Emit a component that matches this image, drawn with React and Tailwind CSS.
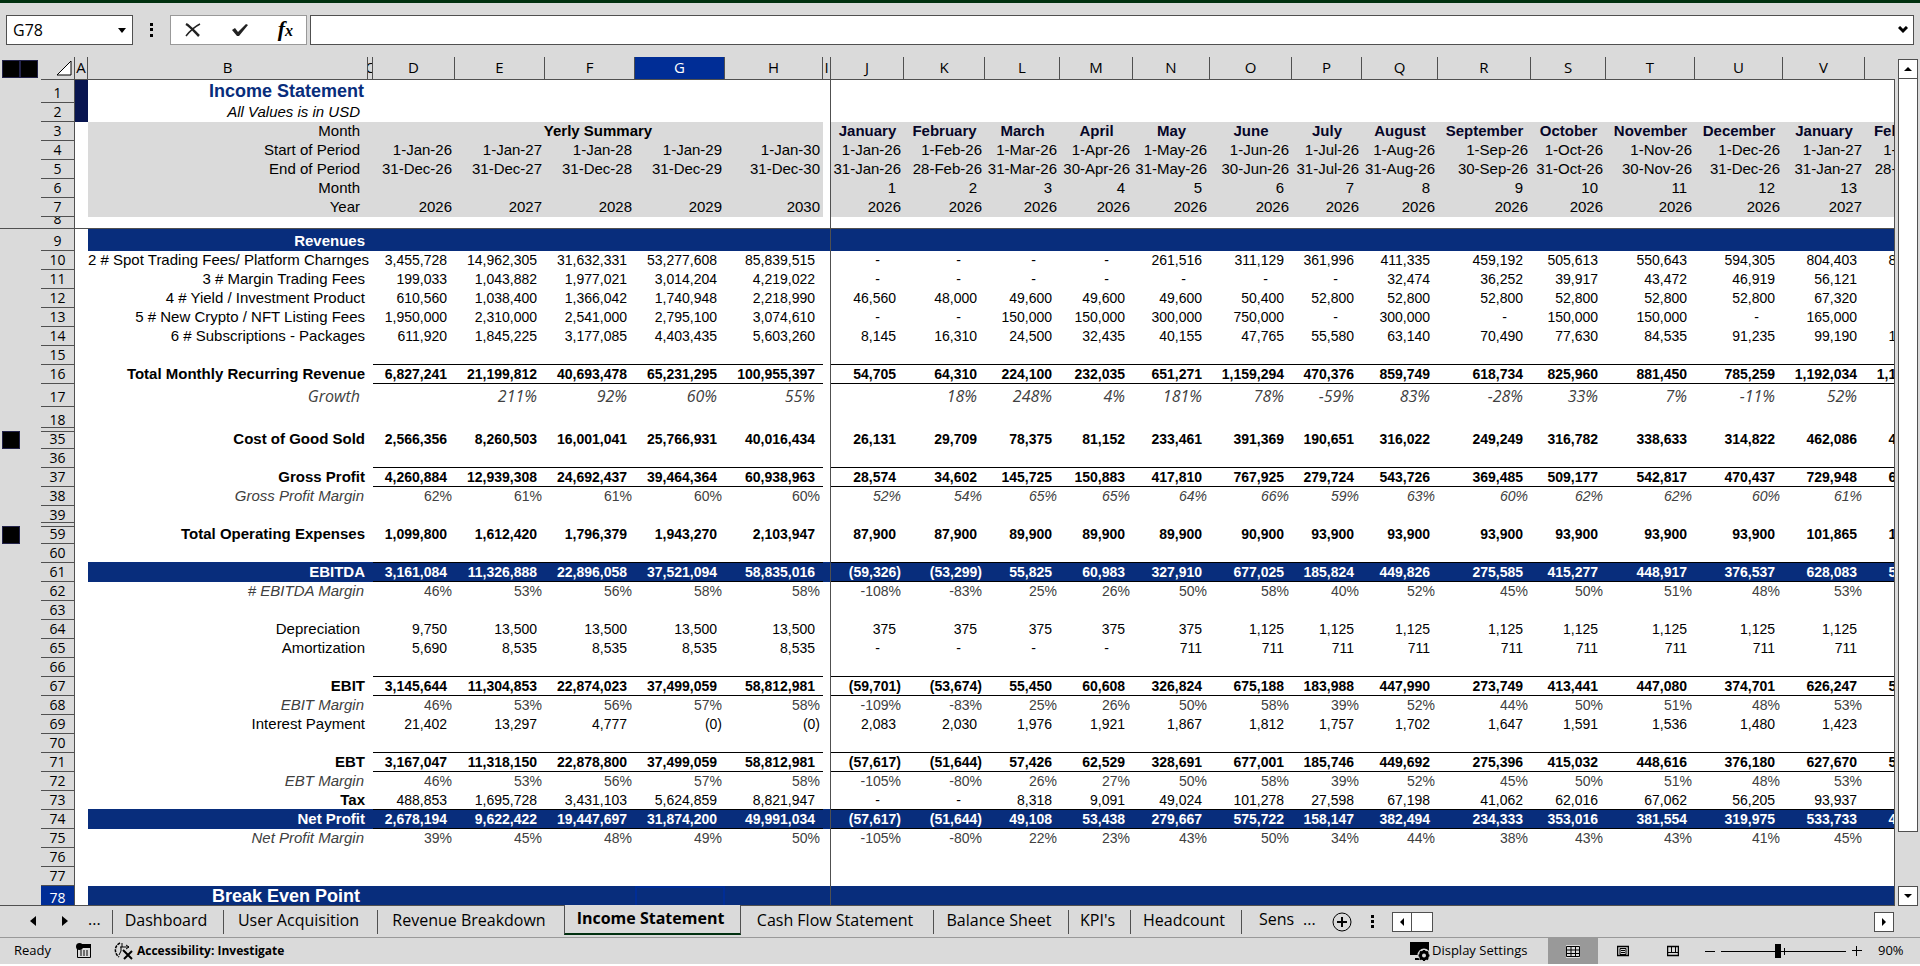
import clsx from "clsx";

const COLUMNS = [
  { id: "A", width: 13 },
  { id: "B", width: 280 },
  { id: "C", width: 5 },
  { id: "D", width: 82 },
  { id: "E", width: 90 },
  { id: "F", width: 90 },
  { id: "G", width: 90 },
  { id: "H", width: 98 },
  { id: "I", width: 8 },
  { id: "J", width: 73 },
  { id: "K", width: 81 },
  { id: "L", width: 75 },
  { id: "M", width: 73 },
  { id: "N", width: 77 },
  { id: "O", width: 82 },
  { id: "P", width: 70 },
  { id: "Q", width: 76 },
  { id: "R", width: 93 },
  { id: "S", width: 75 },
  { id: "T", width: 89 },
  { id: "U", width: 88 },
  { id: "V", width: 82 },
  { id: "W", width: 82 },
];

const MONTH_COLUMNS = COLUMNS.slice(9);
const YEAR_COLUMNS = COLUMNS.slice(3, 8);

const split = (text) => (text ? text.split(" ").map((v) => (v === "_" ? "" : v)) : []);

// years fill D:H, months fill J:W, "_" is an empty cell
const ROWS = [
  { n: 1, label: "Income Statement", kind: "title", height: "h-[23px]" },
  { n: 2, label: "All Values is in USD", kind: "subtitle" },
  {
    n: 3,
    label: "Month",
    kind: "head",
    summary: "Yerly Summary",
    months: "January February March April May June July August September October November December January February",
    monthNames: true,
  },
  {
    n: 4,
    label: "Start of Period",
    kind: "head",
    years: "1-Jan-26 1-Jan-27 1-Jan-28 1-Jan-29 1-Jan-30",
    months: "1-Jan-26 1-Feb-26 1-Mar-26 1-Apr-26 1-May-26 1-Jun-26 1-Jul-26 1-Aug-26 1-Sep-26 1-Oct-26 1-Nov-26 1-Dec-26 1-Jan-27 1-Feb-27",
  },
  {
    n: 5,
    label: "End of Period",
    kind: "head",
    years: "31-Dec-26 31-Dec-27 31-Dec-28 31-Dec-29 31-Dec-30",
    months: "31-Jan-26 28-Feb-26 31-Mar-26 30-Apr-26 31-May-26 30-Jun-26 31-Jul-26 31-Aug-26 30-Sep-26 31-Oct-26 30-Nov-26 31-Dec-26 31-Jan-27 28-Feb-27",
  },
  { n: 6, label: "Month", kind: "head", months: "1 2 3 4 5 6 7 8 9 10 11 12 13 14", wide: true },
  {
    n: 7,
    label: "Year",
    kind: "head",
    years: "2026 2027 2028 2029 2030",
    months: "2026 2026 2026 2026 2026 2026 2026 2026 2026 2026 2026 2026 2027 2027",
  },
  { n: 8, height: "h-[12px]", frozen: true },
  { n: 9, label: "Revenues", kind: "band", height: "h-[22px]" },
  {
    n: 10,
    label: "2 # Spot Trading Fees/ Platform Charnges",
    years: "3,455,728 14,962,305 31,632,331 53,277,608 85,839,515",
    months: "- - - - 261,516 311,129 361,996 411,335 459,192 505,613 550,643 594,305 804,403 862,140",
  },
  {
    n: 11,
    label: "3 # Margin Trading Fees",
    years: "199,033 1,043,882 1,977,021 3,014,204 4,219,022",
    months: "- - - - - - - 32,474 36,252 39,917 43,472 46,919 56,121 60,150",
  },
  {
    n: 12,
    label: "4 # Yield / Investment Product",
    years: "610,560 1,038,400 1,366,042 1,740,948 2,218,990",
    months: "46,560 48,000 49,600 49,600 49,600 50,400 52,800 52,800 52,800 52,800 52,800 52,800 67,320 69,400",
  },
  {
    n: 13,
    label: "5 # New Crypto / NFT Listing Fees",
    years: "1,950,000 2,310,000 2,541,000 2,795,100 3,074,610",
    months: "- - 150,000 150,000 300,000 750,000 - 300,000 - 150,000 150,000 - 165,000 -",
  },
  {
    n: 14,
    label: "6 # Subscriptions - Packages",
    years: "611,920 1,845,225 3,177,085 4,403,435 5,603,260",
    months: "8,145 16,310 24,500 32,435 40,155 47,765 55,580 63,140 70,490 77,630 84,535 91,235 99,190 108,310",
  },
  { n: 15, rule: "black" },
  {
    n: 16,
    label: "Total Monthly Recurring Revenue",
    kind: "total",
    rule: "black",
    years: "6,827,241 21,199,812 40,693,478 65,231,295 100,955,397",
    months: "54,705 64,310 224,100 232,035 651,271 1,159,294 470,376 859,749 618,734 825,960 881,450 785,259 1,192,034 1,100,000",
  },
  {
    n: 17,
    label: "Growth",
    kind: "growth",
    height: "h-[23px]",
    years: "_ 211% 92% 60% 55%",
    months: "_ 18% 248% 4% 181% 78% -59% 83% -28% 33% 7% -11% 52% -8%",
  },
  { n: 18, height: "h-[23px]", hiddenBelow: true },
  {
    n: 35,
    label: "Cost of Good Sold",
    kind: "total",
    hiddenAbove: true,
    years: "2,566,356 8,260,503 16,001,041 25,766,931 40,016,434",
    months: "26,131 29,709 78,375 81,152 233,461 391,369 190,651 316,022 249,249 316,782 338,633 314,822 462,086 436,000",
  },
  { n: 36, rule: "black" },
  {
    n: 37,
    label: "Gross Profit",
    kind: "total",
    rule: "black",
    years: "4,260,884 12,939,308 24,692,437 39,464,364 60,938,963",
    months: "28,574 34,602 145,725 150,883 417,810 767,925 279,724 543,726 369,485 509,177 542,817 470,437 729,948 664,000",
  },
  {
    n: 38,
    label: "Gross Profit Margin",
    kind: "margin",
    italicMonths: true,
    years: "62% 61% 61% 60% 60%",
    months: "52% 54% 65% 65% 64% 66% 59% 63% 60% 62% 62% 60% 61% 60%",
  },
  { n: 39, hiddenBelow: true },
  {
    n: 59,
    label: "Total Operating Expenses",
    kind: "total",
    hiddenAbove: true,
    years: "1,099,800 1,612,420 1,796,379 1,943,270 2,103,947",
    months: "87,900 87,900 89,900 89,900 89,900 90,900 93,900 93,900 93,900 93,900 93,900 93,900 101,865 101,865",
  },
  { n: 60, rule: "band" },
  {
    n: 61,
    label: "EBITDA",
    kind: "band",
    rule: "black",
    years: "3,161,084 11,326,888 22,896,058 37,521,094 58,835,016",
    months: "(59,326) (53,299) 55,825 60,983 327,910 677,025 185,824 449,826 275,585 415,277 448,917 376,537 628,083 562,135",
  },
  {
    n: 62,
    label: "# EBITDA Margin",
    kind: "margin",
    years: "46% 53% 56% 58% 58%",
    months: "-108% -83% 25% 26% 50% 58% 40% 52% 45% 50% 51% 48% 53% 51%",
  },
  { n: 63 },
  {
    n: 64,
    label: "Depreciation",
    kind: "inset",
    years: "9,750 13,500 13,500 13,500 13,500",
    months: "375 375 375 375 375 1,125 1,125 1,125 1,125 1,125 1,125 1,125 1,125 1,125",
  },
  {
    n: 65,
    label: "Amortization",
    years: "5,690 8,535 8,535 8,535 8,535",
    months: "- - - - 711 711 711 711 711 711 711 711 711 711",
  },
  { n: 66, rule: "black" },
  {
    n: 67,
    label: "EBIT",
    kind: "total",
    rule: "black",
    years: "3,145,644 11,304,853 22,874,023 37,499,059 58,812,981",
    months: "(59,701) (53,674) 55,450 60,608 326,824 675,188 183,988 447,990 273,749 413,441 447,080 374,701 626,247 560,299",
  },
  {
    n: 68,
    label: "EBIT Margin",
    kind: "margin",
    years: "46% 53% 56% 57% 58%",
    months: "-109% -83% 25% 26% 50% 58% 39% 52% 44% 50% 51% 48% 53% 51%",
  },
  {
    n: 69,
    label: "Interest Payment",
    years: "21,402 13,297 4,777 (0) (0)",
    months: "2,083 2,030 1,976 1,921 1,867 1,812 1,757 1,702 1,647 1,591 1,536 1,480 1,423 1,366",
  },
  { n: 70, rule: "black" },
  {
    n: 71,
    label: "EBT",
    kind: "total",
    rule: "black",
    years: "3,167,047 11,318,150 22,878,800 37,499,059 58,812,981",
    months: "(57,617) (51,644) 57,426 62,529 328,691 677,001 185,746 449,692 275,396 415,032 448,616 376,180 627,670 561,665",
  },
  {
    n: 72,
    label: "EBT Margin",
    kind: "margin",
    years: "46% 53% 56% 57% 58%",
    months: "-105% -80% 26% 27% 50% 58% 39% 52% 45% 50% 51% 48% 53% 51%",
  },
  {
    n: 73,
    label: "Tax",
    kind: "boldLabel",
    rule: "band",
    years: "488,853 1,695,728 3,431,103 5,624,859 8,821,947",
    months: "- - 8,318 9,091 49,024 101,278 27,598 67,198 41,062 62,016 67,062 56,205 93,937 84,040",
  },
  {
    n: 74,
    label: "Net Profit",
    kind: "band",
    rule: "black",
    years: "2,678,194 9,622,422 19,447,697 31,874,200 49,991,034",
    months: "(57,617) (51,644) 49,108 53,438 279,667 575,722 158,147 382,494 234,333 353,016 381,554 319,975 533,733 477,625",
  },
  {
    n: 75,
    label: "Net Profit Margin",
    kind: "margin",
    years: "39% 45% 48% 49% 50%",
    months: "-105% -80% 22% 23% 43% 50% 34% 44% 38% 43% 43% 41% 45% 43%",
  },
  { n: 76 },
  { n: 77 },
  { n: 78, label: "Break Even Point", kind: "bandTitle", height: "h-[22px]", active: true },
];

const LABEL_STYLES = {
  title: "pr-1 text-[18px] leading-[22px] font-bold text-[#082d7c]",
  subtitle: "pr-2 text-[15px] leading-[18px] italic",
  head: "pr-2 text-[15px] leading-[18px]",
  band: "pr-[3px] text-[15px] leading-[18px] font-bold text-white",
  bandTitle: "pr-2 text-[18px] leading-[21px] font-bold text-white",
  total: "pr-[3px] text-[15px] leading-[18px] font-bold",
  boldLabel: "pr-[3px] text-[15px] leading-[18px] font-bold",
  growth: "pr-2 font-['Open_Sans',sans-serif] text-[16px] leading-5 italic text-[#404040]",
  margin: "pr-1 text-[15px] leading-[18px] italic text-[#404040]",
  inset: "pr-2 text-[15px] leading-[18px]",
  plain: "pr-[3px] text-[15px] leading-[18px]",
};

const VALUE_STYLES = {
  head: "text-[15px] leading-[18px]",
  total: "font-bold",
  band: "font-bold text-white",
  growth: "font-['Open_Sans',sans-serif] text-[16px] leading-5 italic text-[#404040]",
  margin: "text-[#404040]",
};

const valuePadding = (row, value) => {
  if (value === "-") return "pr-6";
  if (value.endsWith(")") || row.kind === "margin") return "pr-[3px]";
  if (row.kind === "head" && !row.wide) return "pr-[3px]";
  return "pr-2";
};

const OutlineMark = () => (
  <span className="block h-[18px] w-[18px] border border-[#23234a] bg-black" />
);

const SheetRow = ({ row }) => {
  const years = split(row.years);
  const months = split(row.months);
  const isBand = row.kind === "band" || row.kind === "bandTitle";
  const fill = isBand ? "bg-[#082d7c]" : row.kind === "head" ? "bg-[#dadada]" : "bg-white";
  const frozen = row.frozen && "border-b border-[#505050]";
  const rule = row.rule ? "border-b border-black" : !row.frozen && "pb-px";
  const sideRule = row.rule === "band" ? "border-b border-[#082d7c]" : !row.frozen && "pb-px";

  return (
    <tr className={row.height || "h-[19px]"}>
      <td className={clsx("bg-[#dadada] p-0 pl-[2px] align-bottom", frozen)}>
        {row.hiddenAbove && <OutlineMark />}
      </td>
      <th
        scope="row"
        className={clsx(
          "overflow-hidden border-r border-[#505050] p-0 font-['Open_Sans',sans-serif] font-normal",
          row.hiddenAbove ? "align-top" : "align-bottom",
          row.active ? "bg-[#002d96] text-white" : "bg-[#dadada]",
          !row.hiddenBelow && "border-b",
        )}
      >
        {row.hiddenAbove && <div className="h-[2px] border-b border-[#505050]" />}
        <div
          className={clsx(
            "leading-[18px]",
            row.hiddenAbove && "-mt-[2px]",
            row.hiddenBelow && "mb-[2px] h-[17px] border-b border-[#505050]",
            row.frozen && "flex h-[11px] items-end justify-center overflow-hidden",
          )}
        >
          {row.n}
        </div>
      </th>
      <td className={clsx("p-0", row.n < 3 ? "bg-[#081550]" : "bg-white", frozen)} />
      <td className={clsx("p-0 text-right align-bottom whitespace-nowrap", fill, frozen, sideRule, LABEL_STYLES[row.kind || "plain"])}>
        {row.label}
      </td>
      <td className={clsx("p-0", fill, frozen, sideRule)} />
      {row.summary ? (
        <td colSpan={5} className={clsx("p-0 pb-px text-center align-bottom text-[15px] leading-[18px] font-bold", fill)}>
          {row.summary}
        </td>
      ) : (
        YEAR_COLUMNS.map((col, i) => (
          <td
            key={col.id}
            className={clsx(
              "p-0 text-right align-bottom whitespace-nowrap",
              fill,
              frozen,
              rule,
              VALUE_STYLES[row.kind],
              valuePadding(row, years[i] || ""),
              row.active && col.id === "G" && "border-x-2 border-t-2 border-[#002d96]",
            )}
          >
            {years[i]}
          </td>
        ))
      )}
      <td
        className={clsx(
          "border-r border-r-[#505050] p-0",
          isBand ? "bg-[#082d7c]" : "bg-white",
          row.frozen && "border-b border-b-[#505050]",
          row.rule === "band" && "border-b border-b-[#082d7c]",
        )}
      />
      {MONTH_COLUMNS.map((col, i) => (
        <td
          key={col.id}
          className={clsx(
            "p-0 align-bottom whitespace-nowrap",
            fill,
            frozen,
            rule,
            VALUE_STYLES[row.kind],
            row.monthNames
              ? "text-center font-bold text-[#060628]"
              : ["text-right", valuePadding(row, months[i] || "")],
            row.italicMonths && "italic",
          )}
        >
          {months[i]}
        </td>
      ))}
    </tr>
  );
};

const FormulaBar = () => (
  <header className="flex items-center border-t-[3px] border-[#00300f] py-3 pr-[6px] pl-[6px] font-['Open_Sans',sans-serif]">
    <div className="flex h-[30px] w-[127px] items-center border border-[#505050] bg-white pr-[6px]">
      <input aria-label="Name box" defaultValue="G78" className="w-full min-w-0 bg-transparent pl-[6px] text-[16px] outline-none" />
      <button aria-label="Show names" className="shrink-0">
        <svg width="8" height="5" viewBox="0 0 8 5"><path d="M0 0h8L4 5z" /></svg>
      </button>
    </div>
    <svg className="mx-[16px]" width="5" height="14" viewBox="0 0 5 14">
      <path d="M1 0h3v3H1zM1 5h3v3H1zM1 11h3v3H1z" />
    </svg>
    <div className="flex h-[30px] w-[137px] items-center justify-between border border-[#999] bg-white px-[13px]">
      <button aria-label="Cancel">
        <svg width="18" height="16" viewBox="0 0 18 16" fill="none" stroke="#222">
          <path d="M2 2c4 2 8 7 13 12" strokeWidth="2.500" />
          <path d="M16 2C10 5 6 9 2 14" strokeWidth="1.500" />
        </svg>
      </button>
      <button aria-label="Enter">
        <svg width="18" height="14" viewBox="0 0 18 14" fill="#222">
          <path d="M1 7l3-2 3 4L15 1l2 1L8 13H6z" />
        </svg>
      </button>
      <button aria-label="Insert function" className="font-['Liberation_Serif',serif] text-[22px] leading-5 font-bold italic">
        <i>f</i><span className="text-[16px]">x</span>
      </button>
    </div>
    <div className="ml-[3px] flex h-[30px] flex-1 items-center border border-[#505050] bg-white pr-[5px]">
      <input aria-label="Formula bar" className="h-full flex-1 bg-transparent px-2 text-[16px] outline-none" />
      <button aria-label="Expand formula bar">
        <svg width="10" height="8" viewBox="0 0 10 8" fill="none" stroke="black" strokeWidth="3"><path d="M1 1l4 4 4-4" /></svg>
      </button>
    </div>
  </header>
);

const ScrollButton = ({ label, d }) => (
  <button aria-label={label} className="flex h-5 w-5 shrink-0 items-center justify-center border border-[#505050] bg-white">
    <svg width="10" height="10" viewBox="0 0 10 10"><path d={d} /></svg>
  </button>
);

const Sheet = () => (
  <main className="flex min-h-0 flex-1">
    <div className="min-w-0 flex-1 overflow-hidden border-b border-[#505050]">
      <table className="w-[1947px] table-fixed border-separate border-spacing-0 font-['Liberation_Sans',Arial,sans-serif] text-[14px] leading-[18px] text-black">
        <colgroup>
          <col className="w-[41px]" />
          <col className="w-[34px]" />
          {COLUMNS.map((col) => (
            <col key={col.id} style={{ width: col.width }} />
          ))}
        </colgroup>
        <thead className="font-['Open_Sans',sans-serif] text-[15px] leading-[18px]">
          <tr className="h-[23px]">
            <td className="p-0">
              <div className="flex pl-[2px]">
                <OutlineMark />
                <OutlineMark />
              </div>
            </td>
            <td className="border-r border-b border-[#505050] p-0">
              <svg className="mr-[2px] ml-auto" width="16" height="16" viewBox="0 0 16 16">
                <path d="M15 1v14H1z" fill="white" stroke="black" />
              </svg>
            </td>
            {COLUMNS.map((col) => (
              <th
                key={col.id}
                scope="col"
                className={clsx(
                  "overflow-hidden border-r border-b border-[#505050] p-0 pb-[2px] font-normal",
                  col.id === "G" && "bg-[#002d96] text-white",
                )}
              >
                {col.id === "W" ? "" : <span className="flex justify-center">{col.id}</span>}
              </th>
            ))}
          </tr>
        </thead>
        <tbody>
          {ROWS.map((row) => (
            <SheetRow key={row.n} row={row} />
          ))}
        </tbody>
      </table>
    </div>
    <div className="mt-[22px] w-[4px] border-l border-[#505050]" />
    <div className="mr-[2px] flex flex-col pt-[2px]">
      <ScrollButton label="Scroll up" d="M1 7h8L5 3z" />
      <div className="-mt-px w-5 flex-[753] border border-[#505050] bg-white" />
      <div className="flex-[54]" />
      <ScrollButton label="Scroll down" d="M1 3h8L5 7z" />
    </div>
  </main>
);

const TABS = [
  { name: "Dashboard", width: "w-[111px]" },
  { name: "User Acquisition", width: "w-[154px]" },
  { name: "Revenue Breakdown", width: "w-[186px]" },
  { name: "Income Statement", width: "w-[177px]", active: true },
  { name: "Cash Flow Statement", width: "w-[193px]" },
  { name: "Balance Sheet", width: "w-[135px]" },
  { name: "KPI's", width: "w-[62px]" },
  { name: "Headcount", width: "w-[111px]" },
];

const SheetTabs = () => (
  <nav className="flex h-[31px] items-start pr-[26px] font-['Open_Sans',sans-serif] text-[16px]">
    <button aria-label="Previous sheet" className="mt-[10px] ml-[30px]">
      <svg width="6" height="10" viewBox="0 0 6 10"><path d="M6 0v10L0 5z" /></svg>
    </button>
    <button aria-label="Next sheet" className="mt-[10px] ml-[26px]">
      <svg width="6" height="10" viewBox="0 0 6 10"><path d="M0 0v10l6-5z" /></svg>
    </button>
    <button className="ml-[20px] w-[24px] text-left leading-[26px]">...</button>
    <div className="flex">
      <span className="mt-1 h-6 w-px bg-[#505050]" />
      {TABS.map((tab, i) => (
        <button
          key={tab.name}
          className={clsx(
            "shrink-0 text-center whitespace-nowrap",
            tab.width,
            tab.active
              ? "-mt-px h-[30px] border-x border-b-2 border-x-[#505050] border-b-[#00300f] bg-[#dadada] pr-1 pb-[2px] font-bold"
              : "mt-1 h-6 pr-1 pb-[5px] leading-5",
            !tab.active && !TABS[i + 1]?.active && "border-r border-[#505050]",
          )}
        >
          {tab.name}
        </button>
      ))}
    </div>
    <button className="ml-[17px] w-[44px] text-left leading-[26px]">Sens</button>
    <button className="w-[29px] text-left leading-[26px]">...</button>
    <button aria-label="New sheet" className="mt-[6px]">
      <svg width="20" height="20" viewBox="0 0 20 20" fill="none" stroke="black">
        <circle cx="10" cy="10" r="9" />
        <path d="M5 10h10M10 5v10" strokeWidth="2" />
      </svg>
    </button>
    <svg className="mt-[9px] ml-[19px]" width="4" height="14" viewBox="0 0 4 14">
      <path d="M0 0h3v3H0zM0 5h3v3H0zM0 10h3v3H0z" />
    </svg>
    <div className="mt-[6px] ml-[17px] flex flex-1">
      <ScrollButton label="Scroll left" d="M7 1v8L3 5z" />
      <div className="-ml-px h-5 w-[22px] border border-[#505050] bg-white" />
      <div className="flex-1" />
      <ScrollButton label="Scroll right" d="M3 1v8l4-4z" />
    </div>
  </nav>
);

const StatusBar = () => (
  <footer className="flex h-[27px] items-center border-t border-[#999] font-['Open_Sans',sans-serif] text-[13px]">
    <span className="ml-[14px] w-[62px]">Ready</span>
    <button aria-label="Record macro">
      <svg width="15" height="16" viewBox="0 0 15 16">
        <path d="M1.500 4.500h13v10h-13z" fill="none" stroke="black" />
        <path d="M5 1h10v4H5z" />
        <circle cx="3.500" cy="3.500" r="3.500" />
        <path d="M4 8h2M7 8h2M10 8h2M4 10h2M7 10h2M10 10h2M4 12h2M7 12h2M10 12h2" stroke="black" />
      </svg>
    </button>
    <button className="ml-[23px] flex items-center gap-[3px] text-[12px] font-bold">
      <svg width="20" height="18" viewBox="0 0 20 18" fill="none" stroke="black">
        <path d="M6 1C0 4 0 11 5 15" strokeWidth="1.500" strokeDasharray="3 1" />
        <path d="M6 5h9M8 1v4M12 3l3 2-3 2M7 5v4l-2 4" />
        <path d="M9 8l9 9M18 9l-8 8" strokeWidth="2" />
      </svg>
      Accessibility: Investigate
    </button>
    <button className="ml-auto flex items-center gap-[2px]">
      <svg width="20" height="19" viewBox="0 0 20 19">
        <path d="M0 0h19v13H0zM5 16h6v2H5z" />
        <circle cx="14" cy="13" r="4" fill="none" stroke="#dadada" strokeWidth="5" />
        <circle cx="14" cy="13.500" r="3.500" fill="none" stroke="black" strokeWidth="3" />
        <path d="M14 8v11M8.500 13.500h11M10 9.500l8 8M18 9.500l-8 8" stroke="black" strokeWidth="2" />
        <circle cx="14" cy="13.500" r="2" fill="#dadada" />
      </svg>
      <span className="w-[116px] text-left">Display Settings</span>
    </button>
    <button aria-label="Normal view" className="flex h-full w-[50px] items-center justify-center bg-[#999]">
      <svg width="14" height="13" viewBox="0 0 14 13">
        <path d="M0 0h14v13H0z" fill="#dadada" />
        <path d="M.5 1.500h13v10H.5zM.5 5h13M.5 8.500h13M5 1.500v10M9.500 1.500v10" fill="none" stroke="black" />
      </svg>
    </button>
    <button aria-label="Page layout view" className="ml-[19px]">
      <svg width="12" height="12" viewBox="0 0 12 12" fill="none" stroke="black">
        <path d="M.5 1.500h11v9H.5z" strokeWidth="1.500" />
        <path d="M3 3.500h6v6H3zM4 5.500h4M4 7.500h4" />
      </svg>
    </button>
    <button aria-label="Page break view" className="ml-[38px]">
      <svg width="12" height="12" viewBox="0 0 12 12" fill="none" stroke="black">
        <path d="M.5 1.500h11v9H.5z" strokeWidth="1.500" />
        <path d="M4.500 1v6M8.500 1v6M1 7.500h10" />
      </svg>
    </button>
    <button aria-label="Zoom out" className="ml-[26px] h-px w-[10px] bg-black" />
    <div className="relative ml-[6px] flex h-[14px] w-[125px] items-center">
      <input
        type="range"
        aria-label="Zoom"
        min="0"
        max="100"
        defaultValue="45"
        className="h-[14px] w-full appearance-none bg-transparent bg-[linear-gradient(#000,#000)] bg-[length:100%_1px] bg-center bg-no-repeat [&::-webkit-slider-thumb]:h-[14px] [&::-webkit-slider-thumb]:w-[6px] [&::-webkit-slider-thumb]:appearance-none [&::-webkit-slider-thumb]:bg-black"
      />
      <span className="absolute top-1 left-1/2 h-[7px] w-px bg-black" />
    </div>
    <button aria-label="Zoom in" className="ml-[6px]">
      <svg width="10" height="10" viewBox="0 0 10 10"><path d="M0 4.500h10M4.500 0v10" stroke="black" /></svg>
    </button>
    <span className="w-[58px] pl-[16px]">90%</span>
  </footer>
);

const App = () => (
  <div className="h-screen bg-white pb-[2px] text-black">
    <div className="flex h-full flex-col overflow-hidden bg-[#dadada]">
      <FormulaBar />
      <Sheet />
      <SheetTabs />
      <StatusBar />
    </div>
  </div>
);

export default App;
